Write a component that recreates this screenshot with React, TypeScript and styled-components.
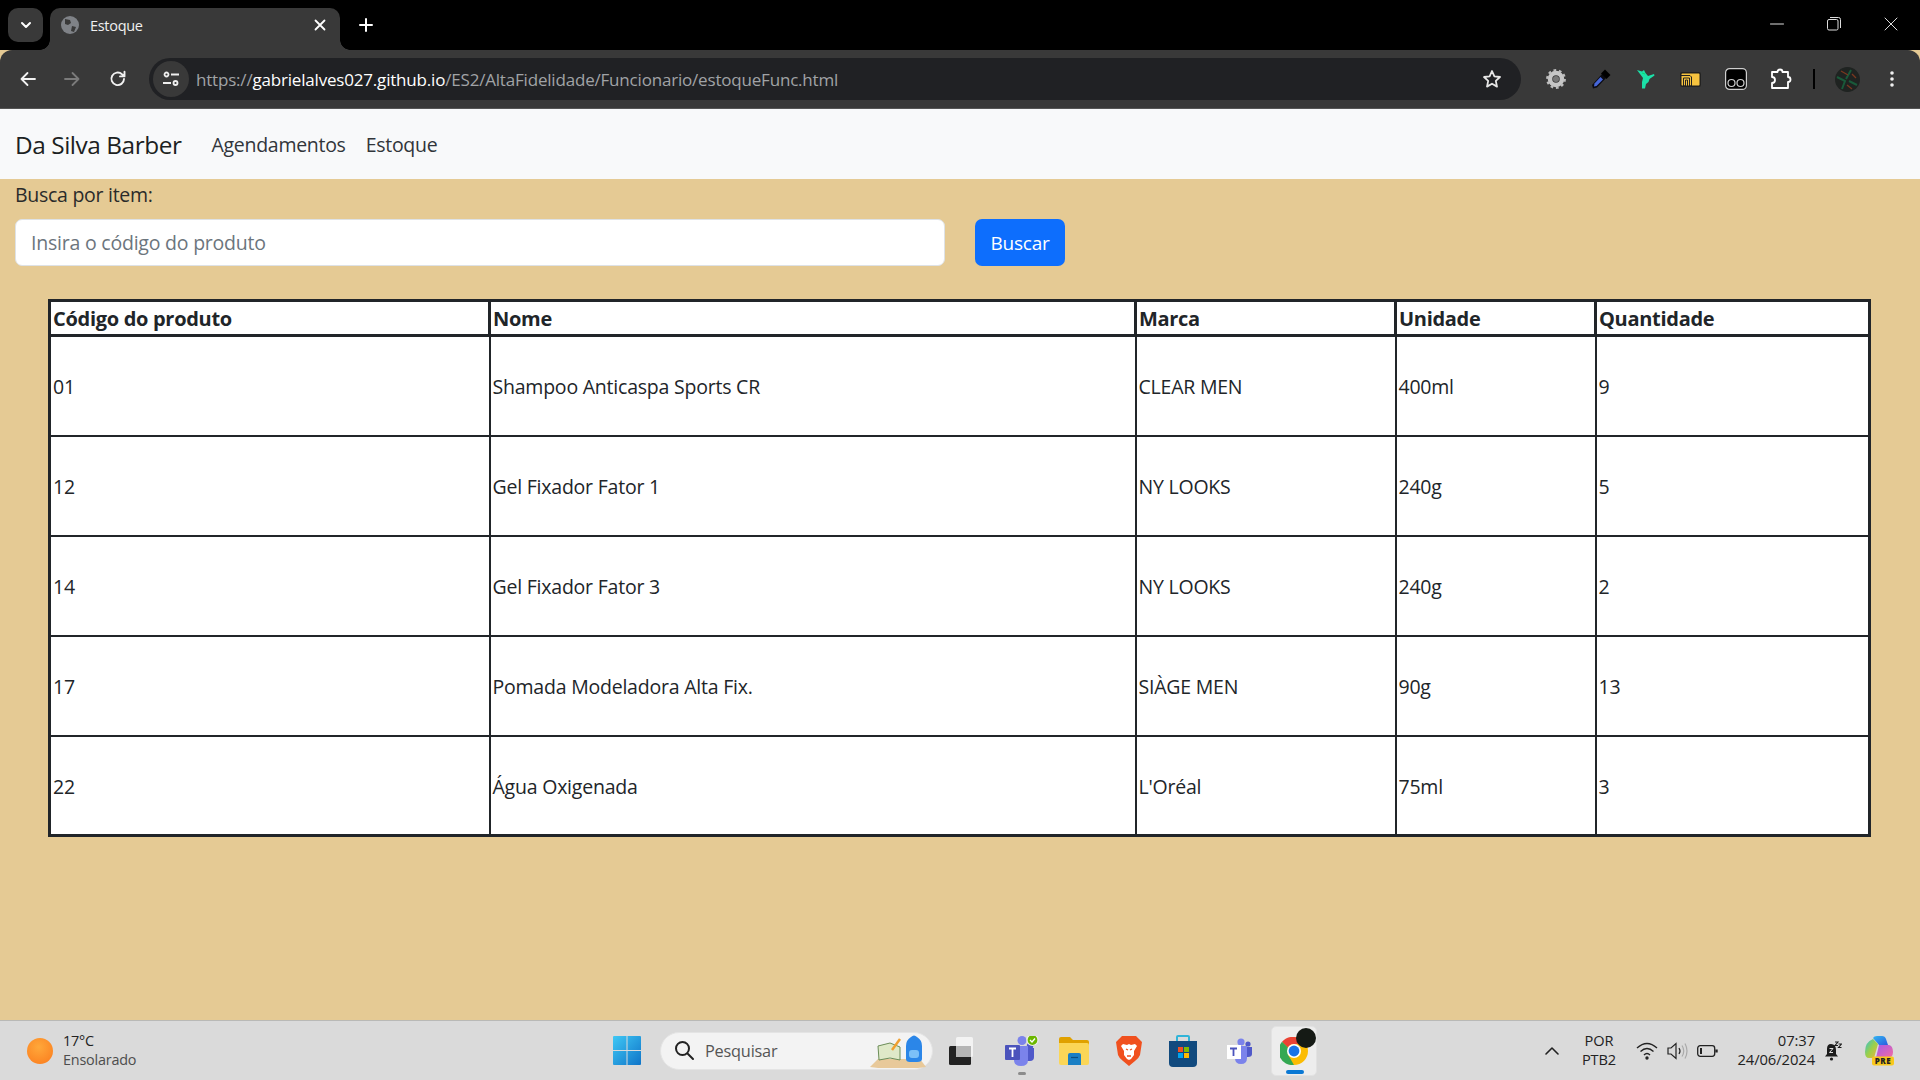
import React from "react";
import styled, { createGlobalStyle } from "styled-components";

const Global = createGlobalStyle`
  html, body { margin: 0; padding: 0; height: 100%; overflow: hidden; }
  body { font-family: "Open Sans", "Noto Sans", sans-serif; color: #212529; }
  #root { height: 1080px; }
`;

const Page = styled.div`
  width: 1920px; height: 1080px; display: flex; flex-direction: column; background: #e5ca94; overflow: hidden;
`;

/* Browser chrome */
const TabStrip = styled.div`
  height: 50px; background: #000; display: flex; align-items: flex-end; padding-left: 8px; flex: none;
`;
const TabListButton = styled.div`
  width: 35px; height: 34px; margin-bottom: 8px; border-radius: 10px; background: #393939;
  display: flex; align-items: center; justify-content: center;
`;
const Tab = styled.div`
  position: relative; width: 290px; height: 42px; margin-left: 7px; background: #393939; border-radius: 10px 10px 0 0;
  display: flex; align-items: center; padding: 0 14px 8px 11px; box-sizing: border-box; color: #f0f0f0;
  font: 14.5px "Open Sans", sans-serif; letter-spacing: -0.3px;
  &::before, &::after { content: ""; position: absolute; bottom: 0; width: 10px; height: 10px; }
  &::before { left: -10px; background: radial-gradient(circle at 0 0, #000 9.5px, #393939 10px); }
  &::after { right: -10px; background: radial-gradient(circle at 100% 0, #000 9.5px, #393939 10px); }
`;
const TabTitle = styled.span`
  flex: 1; margin-left: 11px;
`;
const NewTab = styled.div`
  margin: 0 0 13px 14px; width: 24px; height: 24px; display: flex; align-items: center; justify-content: center;
`;
const WindowControls = styled.div`
  margin-left: auto; display: flex; height: 50px; align-items: center; padding: 0 1px 2px 0; box-sizing: border-box;
`;
const WindowButton = styled.div`
  width: 57px; display: flex; justify-content: center;
`;
const Toolbar = styled.div`
  height: 58px; background: #393939; border-radius: 12px 12px 0 0; display: flex; align-items: center;
  padding-left: 6px; flex: none; border-bottom: 1px solid #555; box-sizing: content-box;
`;
const ToolSlot = styled.div<{ $w?: number }>`
  width: ${(p) => p.$w ?? 45}px; height: 40px; display: flex; align-items: center; justify-content: center; flex: none;
`;
const AddressBar = styled.div`
  width: 1372px; height: 42px; margin: 0 12px 0 7px; border-radius: 21px; background: #202124; flex: none;
  display: flex; align-items: center; box-sizing: border-box; padding-left: 4px;
`;
const SiteInfo = styled.div`
  width: 36px; height: 36px; border-radius: 50%; background: #393939; display: flex; align-items: center; justify-content: center;
`;
const Url = styled.div`
  margin-left: 7px; font: 17px "Open Sans", sans-serif; letter-spacing: -0.19px; color: #a0a3a6; white-space: nowrap;
  b { font-weight: 400; color: #fff; }
`;
const StarSlot = styled.div`
  margin-left: auto; width: 58px; display: flex; justify-content: center;
`;
const Divider = styled.div`
  width: 2px; height: 20px; background: #000; margin: 0 11px 0 10px;
`;

/* Site */
const NavBar = styled.nav`
  height: 70px; background: #f8f9fa; display: flex; align-items: center; padding: 0 15px; flex: none;
`;
const Brand = styled.div`
  font-size: 24.4px; letter-spacing: -0.45px; color: #1c1f22; margin-right: 30px;
`;
const NavLink = styled.div`
  font-size: 19.5px; letter-spacing: -0.28px; color: #31353a; margin-right: 20px;
`;
const Main = styled.main`
  flex: 1; padding: 0 15px; min-height: 0;
`;
const SearchLabel = styled.div`
  font-size: 19.5px; letter-spacing: -0.28px; line-height: 26px; margin-top: 3px; color: #2a2b2a;
`;
const SearchRow = styled.div`
  display: flex; align-items: flex-start; margin-top: 11px; gap: 30px;
`;
const SearchInput = styled.input`
  width: 930px; height: 47px; box-sizing: border-box; border: 1px solid #dee2e6; border-radius: 7px; padding: 0 15px;
  font: 19.5px "Open Sans", sans-serif; letter-spacing: -0.22px; background: #fff; outline: none;
  &::placeholder { color: #6c757d; opacity: 1; }
`;
const SearchButton = styled.button`
  width: 90px; height: 47px; border: 0; border-radius: 7px; background: #0d6efd; color: #fff; padding: 1px 0 0;
  font: 19px "Open Sans", sans-serif; letter-spacing: -0.22px;
`;
const Table = styled.table`
  width: 1820px; margin: 33px 0 0 33px; border-collapse: collapse; table-layout: fixed; background: #fff;
  border: 3px solid #212529; font-size: 19.5px; letter-spacing: -0.22px;
`;
const HeadCell = styled.th`
  height: 35px; padding: 1px 2px; text-align: left; font-weight: 700; font-size: 20px; border: 3px solid #212529; color: #212529; box-sizing: border-box;
  letter-spacing: -0.3px;
`;
const Cell = styled.td`
  height: 100px; padding: 3px 2px 1px; border: 2px solid #212529; box-sizing: border-box;
`;

/* Taskbar */
const Taskbar = styled.footer`
  height: 59px; flex: none; background: #dadada; border-top: 1px solid #b9b9b6; display: grid;
  grid-template-columns: 600px 720px 600px; align-items: center;
`;
const Weather = styled.div`
  display: flex; align-items: center; padding-left: 27px;
`;
const Sun = styled.div`
  width: 26px; height: 26px; border-radius: 50%; background: radial-gradient(circle at 45% 35%, #ffa83a, #fb7a1c);
`;
const WeatherText = styled.div`
  margin-left: 10px; padding-bottom: 2px; font-size: 14.4px; line-height: 19px; color: #222; letter-spacing: -0.2px;
  small { display: block; font-size: 14.4px; color: #4d4d4d; }
`;
const Center = styled.div`
  display: flex; align-items: center; padding-left: 13px; height: 59px;
`;
const SearchPill = styled.div`
  position: relative; width: 273px; height: 38px; margin-left: 19px; border-radius: 19px; background: #f3f3f3; border: 1px solid #e4e4e4;
  box-sizing: border-box; display: flex; align-items: center; padding-left: 13px; color: #555;
  font-size: 16.3px; letter-spacing: -0.2px; gap: 10px;
`;
const PillArt = styled.div`
  position: absolute; right: 6px; bottom: 1px; display: flex;
`;
const AppSlot = styled.div<{ $w: number; $ml: number }>`
  position: relative; width: ${(p) => p.$w}px; margin-left: ${(p) => p.$ml}px; display: flex; justify-content: center; align-items: center; flex: none;
`;
const RunDot = styled.div`
  position: absolute; left: 50%; margin-left: -4px; top: 36px; width: 8px; height: 3px; border-radius: 2px; background: #8b8b8b;
`;
const ChromeCell = styled.div`
  position: relative; width: 46px; height: 50px; margin-left: 18px; border-radius: 5px; background: #ededed; border: 1px solid #e2e2e2; box-sizing: border-box;
  display: flex; align-items: center; justify-content: center; flex: none;
`;
const ActiveBar = styled.div`
  position: absolute; bottom: 1px; left: 14px; width: 18px; height: 4px; border-radius: 2px; background: #0a78d4;
`;
const ChromeBadge = styled.div`
  position: absolute; top: 1px; right: 0; width: 20px; height: 20px; border-radius: 50%; background: #151a15;
`;
const Tray = styled.div`
  display: flex; align-items: center; height: 59px; font-size: 14px; color: #222;
`;
const Lang = styled.div`
  width: 44px; margin-left: 18px; padding-bottom: 2px; text-align: center; line-height: 19px; font-size: 14.6px; letter-spacing: -0.1px;
`;
const TrayIcon = styled.div<{ $ml: number }>`
  margin-left: ${(p) => p.$ml}px; display: flex; flex: none;
`;
const Clock = styled.div`
  width: 90px; margin-left: 7px; padding-bottom: 2px; text-align: right; line-height: 19px; font-size: 14.8px; letter-spacing: -0.1px;
`;
const PreLabel = styled.span`
  position: absolute; right: 0; bottom: 0; width: 22px; text-align: center; font: 800 8px/10px "Open Sans", sans-serif; color: #222; letter-spacing: 0.5px;
`;
const CopilotWrap = styled.div`
  position: relative; margin-left: 23px; width: 29px; height: 30px; flex: none;
`;

const rows = [
  ["01", "Shampoo Anticaspa Sports CR", "CLEAR MEN", "400ml", "9"],
  ["12", "Gel Fixador Fator 1", "NY LOOKS", "240g", "5"],
  ["14", "Gel Fixador Fator 3", "NY LOOKS", "240g", "2"],
  ["17", "Pomada Modeladora Alta Fix.", "SIÀGE MEN", "90g", "13"],
  ["22", "Água Oxigenada", "L'Oréal", "75ml", "3"],
];
const heads = ["Código do produto", "Nome", "Marca", "Unidade", "Quantidade"];
const widths = [440, 646, 260, 200, 274];

const Stroke = ({ w = 20, vb = 20, c = "#fff", sw = 2, d }: { w?: number; vb?: number; c?: string; sw?: number; d: string }) => (
  <svg width={w} height={w} viewBox={`0 0 ${vb} ${vb}`} fill="none" stroke={c} strokeWidth={sw} strokeLinecap="round" strokeLinejoin="round">
    <path d={d} />
  </svg>
);

const Gear = () => (
  <svg width="20" height="20" viewBox="0 0 20 20">
    <circle cx="10" cy="10" r="6" fill="none" stroke="#c6c6c6" strokeWidth="4.5" />
    <circle cx="10" cy="10" r="8.7" fill="none" stroke="#bdbdbd" strokeWidth="2.4" strokeDasharray="2.7 2.76" />
    <circle cx="10" cy="10" r="3" fill="#777" />
  </svg>
);
const Dropper = () => (
  <svg width="20" height="20" viewBox="0 0 20 20">
    <path d="M11 5 L15 9 L6 18.5 L2 19.5 L1 16 Z" fill="#0b0b12" />
    <path d="M9.5 8 L12 10.5 L5.5 17 L3 17.5 L3.5 14.5 Z" fill="#4666d8" />
    <path d="M10 4.5 L14 0.5 L19.5 6 L15.5 10 Z" fill="#000" />
  </svg>
);
const Runner = () => (
  <svg width="18" height="20" viewBox="0 0 18 20">
    <path d="M0 1 L5 2.5 L7 1 L8.5 4 L11 7 L17 5 L17.5 6.5 L12.5 10 L11.5 13 L9 15 L8 19.5 L5 19.5 L5 13 L6 9 L3 5 Z" fill="#1ce0a8" />
    <path d="M5 4 L8 5" stroke="#0d6" strokeWidth="0.8" />
  </svg>
);
const YellowExt = () => (
  <svg width="21" height="15" viewBox="0 0 21 15">
    <rect x="0.75" y="0.75" width="19.5" height="13.5" rx="1.5" fill="#f7c33f" stroke="#222" strokeWidth="1.5" />
    <path d="M1 3.5 H10 L11.5 5 V14 H9.5 V6 H3.5 V14 H5.5 V8 H7.5 V14" fill="none" stroke="#222" strokeWidth="1" />
  </svg>
);
const GlassesExt = () => (
  <svg width="22" height="22" viewBox="0 0 22 22">
    <rect x="0.6" y="0.6" width="20.8" height="20.8" rx="4" fill="#000" stroke="#cfcfcf" strokeWidth="1.2" />
    <circle cx="6.5" cy="15" r="3.5" fill="none" stroke="#cfcfcf" strokeWidth="1.2" />
    <circle cx="15.5" cy="15" r="3.5" fill="none" stroke="#cfcfcf" strokeWidth="1.2" />
  </svg>
);
const Avatar = () => (
  <svg width="25" height="25" viewBox="0 0 25 25">
    <circle cx="12.5" cy="12.5" r="12.5" fill="#1f2321" />
    <path d="M2 10 L10 14 L7 22 M16 3 L11 12 M14 14 L22 18" fill="none" stroke="#195a3a" strokeWidth="2" />
    <path d="M6 4 L13 8 M12 18 L17 22 M17 7 L21 11" stroke="#7a3820" strokeWidth="1.3" />
  </svg>
);
const WinLogo = () => (
  <svg width="28" height="29" viewBox="0 0 28 29">
    <defs>
      <linearGradient id="wl" x1="0" y1="0" x2="1" y2="1"><stop offset="0" stopColor="#3fc8f5" /><stop offset="1" stopColor="#0f74c8" /></linearGradient>
    </defs>
    <path d="M0 1 Q0 0 1 0 H13.5 V14 H0 Z M14.5 0 H27 Q28 0 28 1 V14 H14.5 Z M0 15 H13.5 V29 H1 Q0 29 0 28 Z M14.5 15 H28 V28 Q28 29 27 29 H14.5 Z" fill="url(#wl)" />
  </svg>
);
const TaskView = () => (
  <svg width="24" height="28" viewBox="0 0 24 28">
    <rect x="0" y="9" width="22" height="19" rx="1.5" fill="#222" />
    <rect x="7" y="0" width="17" height="20" rx="1.5" fill="#f5f5f5" fillOpacity="0.9" />
    <rect x="7" y="9" width="15" height="11" fill="#b5b5b5" />
  </svg>
);
const TeamsBig = () => (
  <svg width="34" height="30" viewBox="0 0 34 30">
    <circle cx="17" cy="4.5" r="4.5" fill="#7b83eb" />
    <circle cx="25" cy="10" r="3.2" fill="#5059c9" />
    <path d="M21 12 H29 V21 Q29 25 25 25 H22 Z" fill="#5059c9" />
    <path d="M9 10 H23 V24 Q23 30 16 30 Q9 30 9 24 Z" fill="#7b83eb" />
    <rect x="0" y="9" width="15" height="15" rx="1" fill="#4b53bc" />
    <path d="M4 12.5 H11 M7.5 12.5 V21" stroke="#fff" strokeWidth="1.8" />
    <circle cx="27.5" cy="4" r="5.5" fill="#6bb700" stroke="#eee" strokeWidth="1.2" />
    <path d="M25 4 L27 6 L30 2.5" stroke="#fff" strokeWidth="1.3" fill="none" />
  </svg>
);
const Folder = () => (
  <svg width="30" height="28" viewBox="0 0 30 28">
    <path d="M0 2 Q0 0 2 0 H11 L14 3 H28 Q30 3 30 5 V10 H0 Z" fill="#e0a100" />
    <path d="M0 6 H28 Q30 6 30 8 V26 Q30 28 28 28 H2 Q0 28 0 26 Z" fill="#fbd657" />
    <path d="M9 18 Q9 16 11 16 H20 Q22 16 22 18 V28 H9 Z" fill="#1a7fc4" />
    <path d="M12 20.5 H19" stroke="#0c4f80" strokeWidth="1.2" />
  </svg>
);
const Brave = () => (
  <svg width="26" height="30" viewBox="0 0 26 30">
    <path d="M6 0 H20 L23 3 L26 6 L24 19 Q23 22 19 25 L13 30 L7 25 Q3 22 2 19 L0 6 L3 3 Z" fill="#f0501e" />
    <path d="M7 8 L11 9 L13 8 L15 9 L19 8 L21 10 L18 15 L18 19 L15 23 L13 24 L11 23 L8 19 L8 15 L5 10 Z" fill="#fff" />
    <path d="M10 13 L12 14 M16 13 L14 14 M11 20 H15" stroke="#f0501e" strokeWidth="1.3" />
  </svg>
);
const Store = () => (
  <svg width="28" height="32" viewBox="0 0 28 32">
    <path d="M8 6 V2 Q8 1 9 1 H19 Q20 1 20 2 V6" fill="none" stroke="#31b4d8" strokeWidth="2" />
    <path d="M0 6 H28 V28 Q28 32 24 32 H4 Q0 32 0 28 Z" fill="#114a7e" />
    <rect x="9" y="12" width="5" height="5" fill="#f25022" />
    <rect x="15" y="12" width="5" height="5" fill="#7fba00" />
    <rect x="9" y="18" width="5" height="5" fill="#00a4ef" />
    <rect x="15" y="18" width="5" height="5" fill="#ffb900" />
  </svg>
);
const TeamsSmall = () => (
  <svg width="26" height="26" viewBox="0 0 26 26">
    <circle cx="14" cy="4" r="3.6" fill="#7b83eb" />
    <circle cx="21" cy="6" r="2.6" fill="#5059c9" />
    <path d="M18 9 H25 V16 Q25 19 21 19 H18 Z" fill="#5059c9" />
    <path d="M8 8 H20 V20 Q20 26 14 26 Q8 26 8 20 Z" fill="#7b83eb" />
    <rect x="0" y="7" width="14" height="14" fill="#fff" />
    <path d="M3 10.5 H10 M6.5 10.5 V18" stroke="#4b53bc" strokeWidth="1.8" />
  </svg>
);
const Chrome = () => (
  <svg width="28" height="28" viewBox="0 0 28 28">
    <circle cx="14" cy="14" r="14" fill="#fbbc04" />
    <path d="M14 0 A14 14 0 0 1 26.1 7 H14 A7 7 0 0 0 7.9 10.5 L2 4.8 A14 14 0 0 1 14 0 Z" fill="#ea4335" />
    <path d="M2 4.8 L7.9 10.5 L7.9 17.5 L14 28 A14 14 0 0 1 2 4.8 Z" fill="#34a853" />
    <circle cx="14" cy="14" r="7" fill="#fff" />
    <circle cx="14" cy="14" r="5.4" fill="#1a73e8" />
  </svg>
);
const SearchArt = () => (
  <svg width="56" height="34" viewBox="0 0 56 34">
    <path d="M0 33 L8 25 H50 L56 33 Q28 37 0 33 Z" fill="#e8c99a" />
    <path d="M8 12 L20 9 L30 13 V26 L20 24 L9 26 Z" fill="#dfe9c8" stroke="#6b8d58" strokeWidth="1" />
    <path d="M22 16 L30 5" stroke="#f0a030" strokeWidth="2.5" />
    <path d="M41 3 Q44 0 47 3 Q52 6 52 12 V25 Q52 28 47 28 H40 Q36 28 36 25 V12 Q36 6 41 3 Z" fill="#2b86e8" />
    <rect x="39" y="16" width="10" height="8" rx="3" fill="#7cc0f8" />
  </svg>
);
const Copilot = () => (
  <svg width="29" height="30" viewBox="0 0 29 30">
    <defs>
      <linearGradient id="cpa" x1="0" y1="0" x2="1" y2="1"><stop offset="0" stopColor="#32b7f0" /><stop offset="1" stopColor="#2a5be0" /></linearGradient>
      <linearGradient id="cpb" x1="0" y1="0" x2="1" y2="1"><stop offset="0" stopColor="#2fc0d8" /><stop offset="0.5" stopColor="#9ad04a" /><stop offset="1" stopColor="#f0b43a" /></linearGradient>
      <linearGradient id="cpc" x1="0" y1="0" x2="1" y2="1"><stop offset="0" stopColor="#a45be8" /><stop offset="1" stopColor="#f56aa0" /></linearGradient>
    </defs>
    <path d="M8 2 Q9 0 12 0 H17 Q20 0 21 3 L23 9 H14 Z" fill="url(#cpa)" />
    <path d="M0 16 Q0 6 8 3 L13 8 L9 22 H4 Q0 22 0 16 Z" fill="url(#cpb)" />
    <path d="M14 9 H24 Q28 10 28 16 Q28 22 22 22 H11 Z" fill="url(#cpc)" />
    <rect x="7" y="20.5" width="22" height="9" rx="2" fill="#f8c81c" />
  </svg>
);

export default function App() {
  return (
    <Page>
      <Global />
      <TabStrip>
        <TabListButton><Stroke w={14} vb={14} sw={2} d="M3 5 L7 9 L11 5" /></TabListButton>
        <Tab>
          <svg width="18" height="18" viewBox="0 0 18 18">
            <circle cx="9" cy="9" r="9" fill="#7f8287" />
            <path d="M4 3 L9 4 L10 7 L7 9 L4 8 Z M11 10 L15 11 L13 16 L10 15 Z" fill="#393939" />
          </svg>
          <TabTitle>Estoque</TabTitle>
          <Stroke w={12} vb={12} sw={1.8} d="M1.5 1.5 L10.5 10.5 M10.5 1.5 L1.5 10.5" />
        </Tab>
        <NewTab><Stroke w={14} vb={14} sw={2} c="#fff" d="M7 1 V13 M1 7 H13" /></NewTab>
        <WindowControls>
          <WindowButton><Stroke w={14} vb={14} sw={1} c="#ddd" d="M0.5 7 H13.5" /></WindowButton>
          <WindowButton>
            <svg width="14" height="14" viewBox="0 0 14 14" fill="none" stroke="#ddd" strokeWidth="1">
              <rect x="0.5" y="2.5" width="10.5" height="10.5" rx="1.5" />
              <path d="M3 0.5 H11.5 Q13.5 0.5 13.5 2.5 V11" />
            </svg>
          </WindowButton>
          <WindowButton><Stroke w={14} vb={14} sw={1} c="#ddd" d="M1 1 L13 13 M13 1 L1 13" /></WindowButton>
        </WindowControls>
      </TabStrip>
      <Toolbar>
        <ToolSlot $w={43}><Stroke w={18} vb={18} sw={1.8} d="M16 9 H2.5 M8.5 3 L2.5 9 L8.5 15" c="#f2f2f2" /></ToolSlot>
        <ToolSlot $w={45}><Stroke w={18} vb={18} sw={1.8} d="M2 9 H15.5 M9.5 3 L15.5 9 L9.5 15" c="#7b7b7b" /></ToolSlot>
        <ToolSlot $w={48}><Stroke w={18} vb={18} sw={1.9} c="#f2f2f2" d="M15 9 A6.3 6.3 0 1 1 13 4.2 L15.5 6.2 M15.5 1.8 V6.4 H11" /></ToolSlot>
        <AddressBar>
          <SiteInfo>
            <svg width="18" height="16" viewBox="0 0 18 16" fill="none" stroke="#eee" strokeWidth="1.8">
              <circle cx="4.5" cy="3.5" r="2" /><path d="M9 3.5 H17 M1 12 H9" /><circle cx="13.5" cy="12" r="2" />
            </svg>
          </SiteInfo>
          <Url>https://<b>gabrielalves027.github.io</b>/ES2/AltaFidelidade/Funcionario/estoqueFunc.html</Url>
          <StarSlot>
            <Stroke w={20} vb={20} sw={1.8} c="#e6e6e6" d="M10 2 L12.4 7.4 L18 8 L13.8 11.9 L15 17.6 L10 14.7 L5 17.6 L6.2 11.9 L2 8 L7.6 7.4 Z" />
          </StarSlot>
        </AddressBar>
        <ToolSlot><Gear /></ToolSlot>
        <ToolSlot><Dropper /></ToolSlot>
        <ToolSlot><Runner /></ToolSlot>
        <ToolSlot><YellowExt /></ToolSlot>
        <ToolSlot $w={45}><GlassesExt /></ToolSlot>
        <ToolSlot>
          <Stroke w={22} vb={22} sw={1.8} d="M2 4 H7.5 Q7.5 1.5 10 1.5 Q12.5 1.5 12.5 4 H18 V9 Q20.5 9 20.5 11.5 Q20.5 14 18 14 V20 H2 V15 Q5 15 5 12 Q5 9 2 9 Z" />
        </ToolSlot>
        <Divider />
        <ToolSlot $w={43}><Avatar /></ToolSlot>
        <ToolSlot $w={46}>
          <svg width="4" height="16" viewBox="0 0 4 16" fill="#f0f0f0"><circle cx="2" cy="2" r="1.8" /><circle cx="2" cy="8" r="1.8" /><circle cx="2" cy="14" r="1.8" /></svg>
        </ToolSlot>
      </Toolbar>

      <NavBar>
        <Brand>Da Silva Barber</Brand>
        <NavLink>Agendamentos</NavLink>
        <NavLink>Estoque</NavLink>
      </NavBar>
      <Main>
        <SearchLabel>Busca por item:</SearchLabel>
        <SearchRow>
          <SearchInput placeholder="Insira o código do produto" readOnly />
          <SearchButton>Buscar</SearchButton>
        </SearchRow>
        <Table>
          <colgroup>{widths.map((w, i) => <col key={i} width={w} />)}</colgroup>
          <thead>
            <tr>{heads.map((h) => <HeadCell key={h}>{h}</HeadCell>)}</tr>
          </thead>
          <tbody>
            {rows.map((r) => (
              <tr key={r[0]}>{r.map((c, i) => <Cell key={i}>{c}</Cell>)}</tr>
            ))}
          </tbody>
        </Table>
      </Main>

      <Taskbar>
        <Weather>
          <Sun />
          <WeatherText>17°C<small>Ensolarado</small></WeatherText>
        </Weather>
        <Center>
          <WinLogo />
          <SearchPill>
            <Stroke w={21} vb={21} sw={2} c="#222" d="M13.5 13.5 L19 19 M15 8.5 A6.5 6.5 0 1 1 2 8.5 A6.5 6.5 0 1 1 15 8.5 Z" />
            Pesquisar
            <PillArt><SearchArt /></PillArt>
          </SearchPill>
          <AppSlot $w={24} $ml={16}><TaskView /></AppSlot>
          <AppSlot $w={34} $ml={32}><TeamsBig /><RunDot /></AppSlot>
          <AppSlot $w={30} $ml={20}><Folder /></AppSlot>
          <AppSlot $w={26} $ml={27}><Brave /></AppSlot>
          <AppSlot $w={28} $ml={27}><Store /></AppSlot>
          <AppSlot $w={26} $ml={30}><TeamsSmall /></AppSlot>
          <ChromeCell><Chrome /><ChromeBadge /><ActiveBar /></ChromeCell>
        </Center>
        <Tray>
          <TrayIcon $ml={225}><Stroke w={14} vb={14} sw={1.6} c="#222" d="M1 10 L7 4 L13 10" /></TrayIcon>
          <Lang>POR<br />PTB2</Lang>
          <TrayIcon $ml={15}>
            <svg width="22" height="18" viewBox="0 0 22 18" fill="none" stroke="#222" strokeWidth="1.4">
              <path d="M1 6 Q11 -3 21 6 M4.5 9.5 Q11 3.5 17.5 9.5 M8 13 Q11 10 14 13" /><circle cx="11" cy="16" r="1" fill="#222" />
            </svg>
          </TrayIcon>
          <TrayIcon $ml={9}>
            <svg width="21" height="18" viewBox="0 0 21 18" fill="none" strokeWidth="1.2">
              <path d="M1 6 H4 L9 1.5 V16.5 L4 12 H1 Z" stroke="#222" />
              <path d="M12 6 Q14 9 12 12" stroke="#222" />
              <path d="M15 3.5 Q18.5 9 15 14.5 M18 1.5 Q22 9 18 16.5" stroke="#aaa" />
            </svg>
          </TrayIcon>
          <TrayIcon $ml={9}>
            <svg width="21" height="12" viewBox="0 0 21 12" fill="none" stroke="#222" strokeWidth="1.3">
              <rect x="0.7" y="0.7" width="17" height="10.6" rx="2.5" />
              <rect x="3" y="3" width="2" height="6" fill="#222" stroke="none" />
              <path d="M19.5 4.5 V7.5" strokeWidth="2.4" />
            </svg>
          </TrayIcon>
          <Clock>07:37<br />24/06/2024</Clock>
          <TrayIcon $ml={9}>
            <svg width="18" height="20" viewBox="0 0 18 20">
              <path d="M7 3 Q12 3 12 9 V13 L14 15.5 H1 L3 13 V8 Q3 3 7 3 Z" fill="#1c1c1c" />
              <circle cx="7.5" cy="18" r="1.6" fill="#1c1c1c" />
              <path d="M5.5 7.5 H9 L5.5 11.5 H9" stroke="#ddd" strokeWidth="1" fill="none" />
              <path d="M11 1 H14 L11 4.5 H14 M14.5 3 H17.5 L14.5 6.5 H17.5" stroke="#1c1c1c" strokeWidth="1.1" fill="none" />
            </svg>
          </TrayIcon>
          <CopilotWrap><Copilot /><PreLabel>PRE</PreLabel></CopilotWrap>
        </Tray>
      </Taskbar>
    </Page>
  );
}
